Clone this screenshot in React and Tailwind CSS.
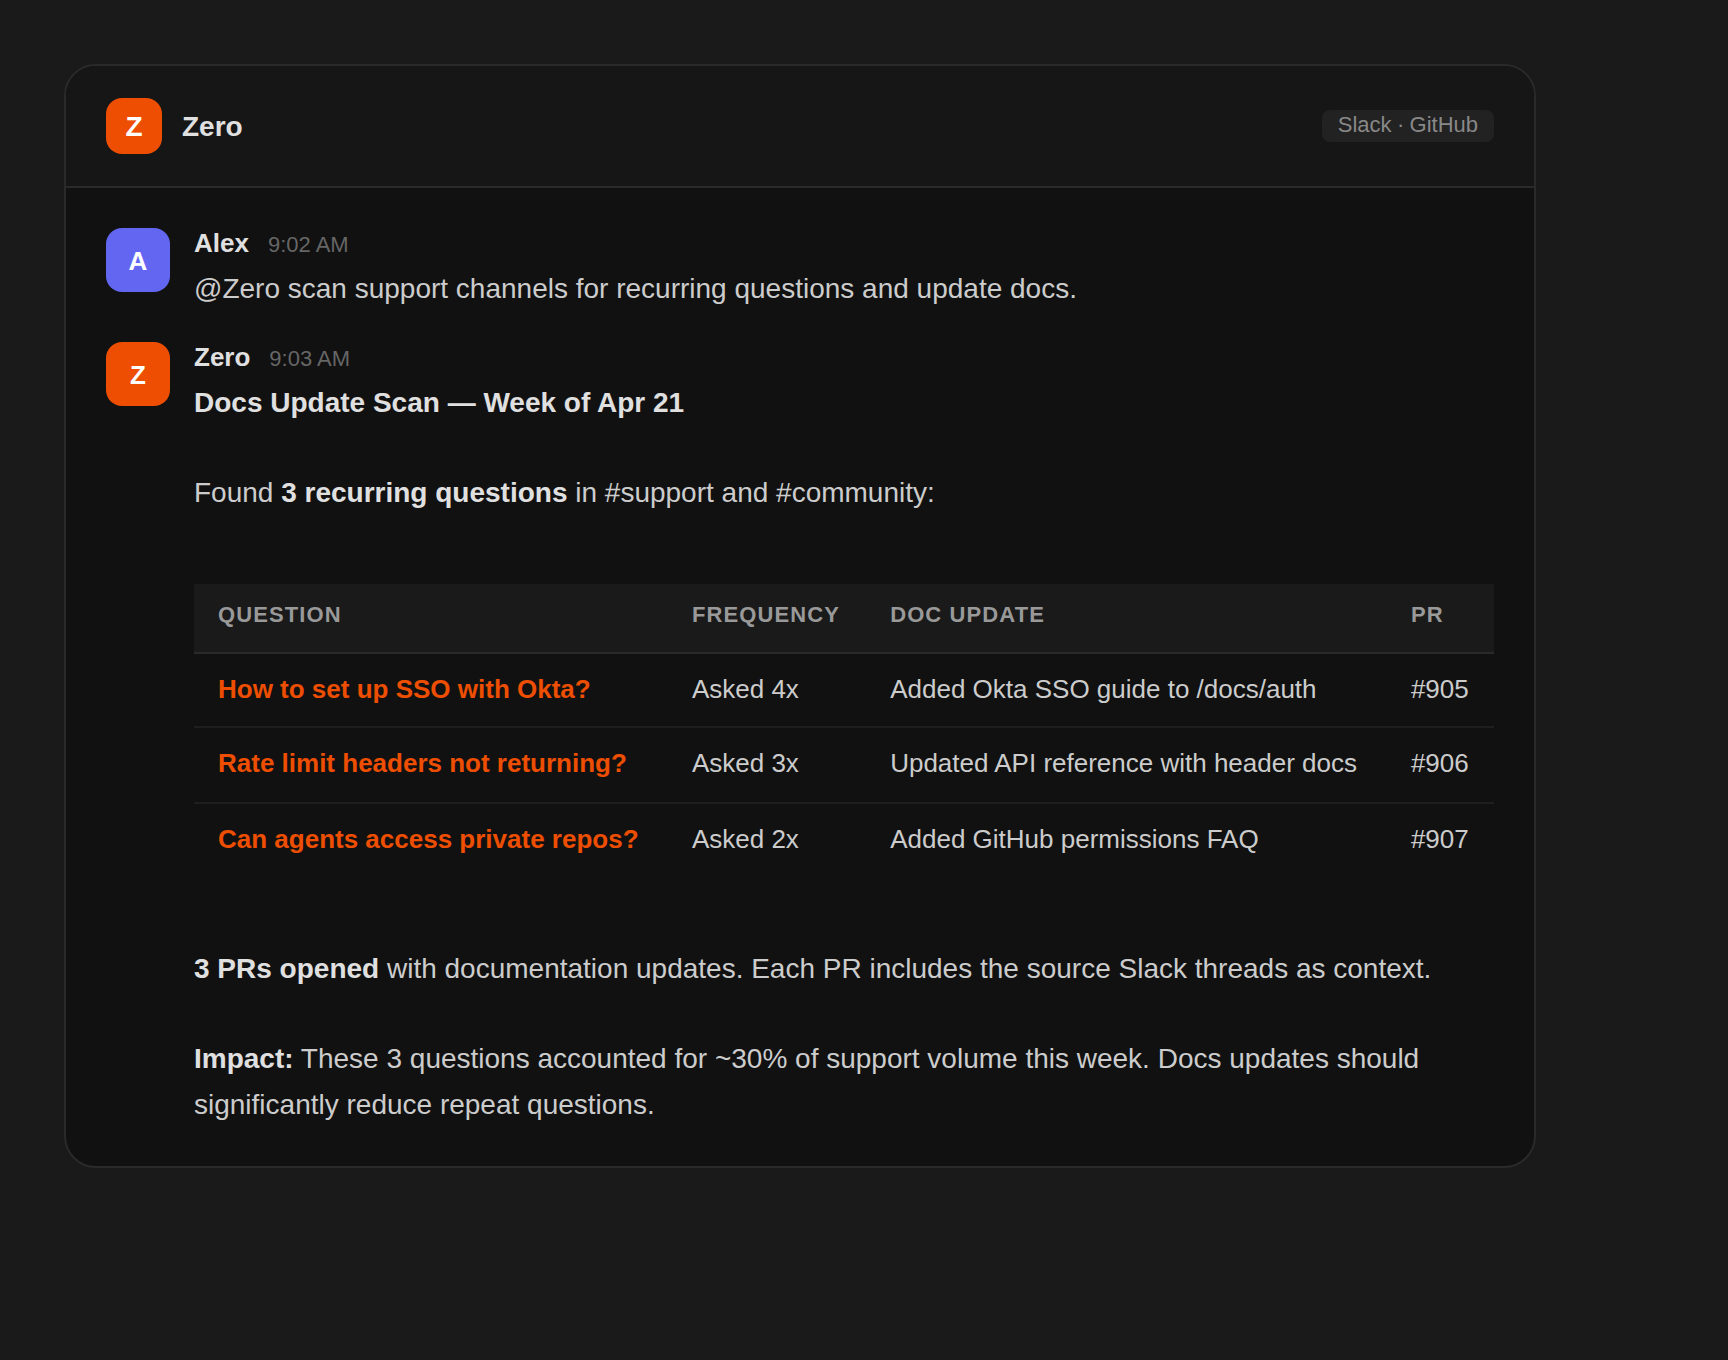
const ROWS = [
  { question: 'How to set up SSO with Okta?', frequency: 'Asked 4x', update: 'Added Okta SSO guide to /docs/auth', pr: '#905' },
  { question: 'Rate limit headers not returning?', frequency: 'Asked 3x', update: 'Updated API reference with header docs', pr: '#906' },
  { question: 'Can agents access private repos?', frequency: 'Asked 2x', update: 'Added GitHub permissions FAQ', pr: '#907' },
]

const HEIGHTS = ['h-[74px]', 'h-[76px]', 'h-[73px]']

function Message({ initial, color, name, time, children }) {
  return (
    <div className="flex items-start gap-6">
      <div className={`flex size-16 shrink-0 items-center justify-center rounded-2xl text-[26px] leading-[30px] font-bold text-white ${color}`}>
        <span className="pt-0.5">{initial}</span>
      </div>
      <div className="min-w-0 flex-1">
        <div className="mb-[7px] flex h-[31px] items-baseline gap-[19px] leading-[30px]">
          <span className="text-[26px] font-bold text-[#e0e0e0]">{name}</span>
          <span className="text-[22px] text-[#666]">{time}</span>
        </div>
        <div className="text-[28px] leading-[45px] text-[#ccc]">{children}</div>
      </div>
    </div>
  )
}

function Strong({ children }) {
  return <strong className="font-bold text-[#e0e0e0]">{children}</strong>
}

function ScanTable() {
  const th = 'px-6 pt-[18px] align-top font-bold'
  const td = 'px-6 pt-5 align-top'
  return (
    <table className="w-full border-collapse text-left text-[26px] leading-[30px]">
      <thead>
        <tr className="h-[70px] bg-[#1a1a1a] text-[22px] leading-[25px] tracking-[1.1px] text-[#999] uppercase shadow-[inset_0_-2px_0_#2a2a2a]">
          <th className={th}>Question</th>
          <th className={th}>Frequency</th>
          <th className={th}>Doc update</th>
          <th className={th}>PR</th>
        </tr>
      </thead>
      <tbody>
        {ROWS.map((r, i) => (
          <tr key={r.pr} className={`${HEIGHTS[i]} ${i < ROWS.length - 1 ? 'shadow-[inset_0_-2px_0_#1e1e1e]' : ''}`}>
            <td className={`${td} font-bold text-[#ed4e01]`}>{r.question}</td>
            <td className={td}>{r.frequency}</td>
            <td className={td}>{r.update}</td>
            <td className={td}>{r.pr}</td>
          </tr>
        ))}
      </tbody>
    </table>
  )
}

function App() {
  return (
    <div className="min-h-screen bg-[#1a1a1a] p-16 font-['Liberation_Sans',Arial,sans-serif]">
      <div className="h-[1104px] w-[1472px] rounded-[32px] border-2 border-[#2a2a2a] bg-[#111]">
        <div className="flex items-center gap-5 rounded-t-[30px] border-b-2 border-[#2a2a2a] bg-[#161616] px-10 py-8">
          <div className="flex size-14 items-center justify-center rounded-2xl bg-[#ed4e01] pt-0.5 text-[28px] leading-8 font-bold text-white">Z</div>
          <span className="pt-0.5 text-[28px] leading-8 font-bold text-[#e0e0e0]">Zero</span>
          <span className="ml-auto rounded-lg bg-[#222] px-4 pt-[3px] pb-[5px] text-[22px] leading-6 text-[#888] [word-spacing:-0.8px]">Slack · GitHub</span>
        </div>

        <div className="flex flex-col gap-[31px] p-10">
          <Message initial="A" color="bg-[#6366f1]" name="Alex" time="9:02 AM">
            @Zero scan support channels for recurring questions and update docs.
          </Message>

          <Message initial="Z" color="bg-[#ed4e01]" name="Zero" time="9:03 AM">
            <p><Strong>Docs Update Scan — Week of Apr 21</Strong></p>
            <p className="mt-[45px]">Found <Strong>3 recurring questions</Strong> in #support and #community:</p>
            <div className="my-[69px]">
              <ScanTable />
            </div>
            <p><Strong>3 PRs opened</Strong> with documentation updates. Each PR includes the source Slack threads as context.</p>
            <p className="mt-[45px] leading-[46px]">
              <Strong>Impact:</Strong> These 3 questions accounted for ~30% of support volume this week. Docs updates should significantly reduce repeat questions.
            </p>
          </Message>
        </div>
      </div>
    </div>
  )
}

export default App
